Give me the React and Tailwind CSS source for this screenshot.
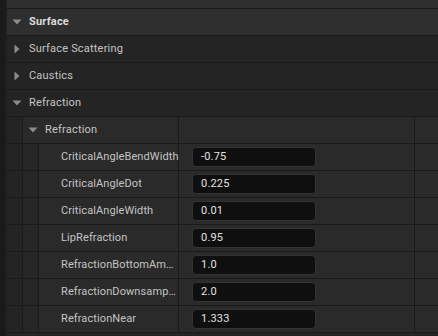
import React from "react";

const props = [
  { name: "CriticalAngleBendWidth", value: "-0.75" },
  { name: "CriticalAngleDot", value: "0.225" },
  { name: "CriticalAngleWidth", value: "0.01" },
  { name: "LipRefraction", value: "0.95" },
  { name: "RefractionBottomAm…", value: "1.0" },
  { name: "RefractionDownsamp…", value: "2.0" },
  { name: "RefractionNear", value: "1.333" },
];

const ArrowDown = () => (
  <svg width="10" height="6" viewBox="0 0 10 6" className="shrink-0">
    <path d="M0.5 0.5 L9.5 0.5 L5 5.5 Z" fill="#8c8c8c" />
  </svg>
);

const ArrowRight = () => (
  <svg width="6" height="10" viewBox="0 0 6 10" className="shrink-0">
    <path d="M0.5 0.5 L5.5 5 L0.5 9.5 Z" fill="#8c8c8c" />
  </svg>
);

const Category = ({ label, open, bold }) => (
  <div
    className={`flex h-[26px] items-center ${
      bold ? "bg-[#2f2f2f]" : "bg-[#242424]"
    }`}
  >
    <div className={`flex w-[22px] ${open ? "pl-[5px]" : "pl-[7px]"}`}>
      {open ? <ArrowDown /> : <ArrowRight />}
    </div>
    <span
      className={`text-[11px] tracking-[0.2px] ${
        bold ? "font-bold text-[#dcdcdc]" : "text-[#c4c4c4]"
      }`}
    >
      {label}
    </span>
  </div>
);

const PropRow = ({ name, value }) => (
  <div className="flex h-[26px] gap-px">
    <div className="w-[15px] bg-[#242424]" />
    <div className="w-[15px] bg-[#262626]" />
    <div className="flex w-[139px] items-center bg-[#2a2a2a] pl-[22px]">
      <span className="whitespace-nowrap text-[11px] tracking-[0.1px] text-[#c4c4c4]">{name}</span>
    </div>
    <div className="flex w-[235px] items-center bg-[#2a2a2a] pl-[13px]">
      <div className="flex h-[20px] w-[124px] items-center rounded-[4px] border border-[#333333] bg-[#0f0f0f] pl-[8px] text-[11px] tracking-[0.2px] text-[#e2e2e2]">
        {value}
      </div>
    </div>
    <div className="flex-1 bg-[#2a2a2a]" />
  </div>
);

export default function App() {
  return (
    <div
      className="flex h-[336px] w-[438px] overflow-hidden bg-[#1a1a1a]"
      style={{ fontFamily: "Roboto, 'Liberation Sans', sans-serif" }}
    >
      <div className="w-[5px] bg-[#1a1a1a]" />
      <div className="w-[2px] bg-[#1e1e1e]" />
      <div className="flex flex-1 flex-col gap-px bg-[#1a1a1a]">
        <div className="h-[8px] bg-[#2f2f2f]" />
        <Category label="Surface" open bold />
        <Category label="Surface Scattering" />
        <Category label="Caustics" />
        <Category label="Refraction" open />

        {/* nested group */}
        <div className="flex h-[26px] gap-px">
          <div className="w-[15px] bg-[#242424]" />
          <div className="flex w-[155px] items-center bg-[#2a2a2a]">
            <div className="flex w-[22px] pl-[5px]">
              <ArrowDown />
            </div>
            <span className="text-[11px] tracking-[0.2px] text-[#c4c4c4]">Refraction</span>
          </div>
          <div className="w-[235px] bg-[#2a2a2a]" />
          <div className="flex-1 bg-[#2a2a2a]" />
        </div>
        {props.map((p) => (
          <PropRow key={p.name} name={p.name} value={p.value} />
        ))}
        <div className="flex-1 bg-[#242424]" />
      </div>
    </div>
  );
}
